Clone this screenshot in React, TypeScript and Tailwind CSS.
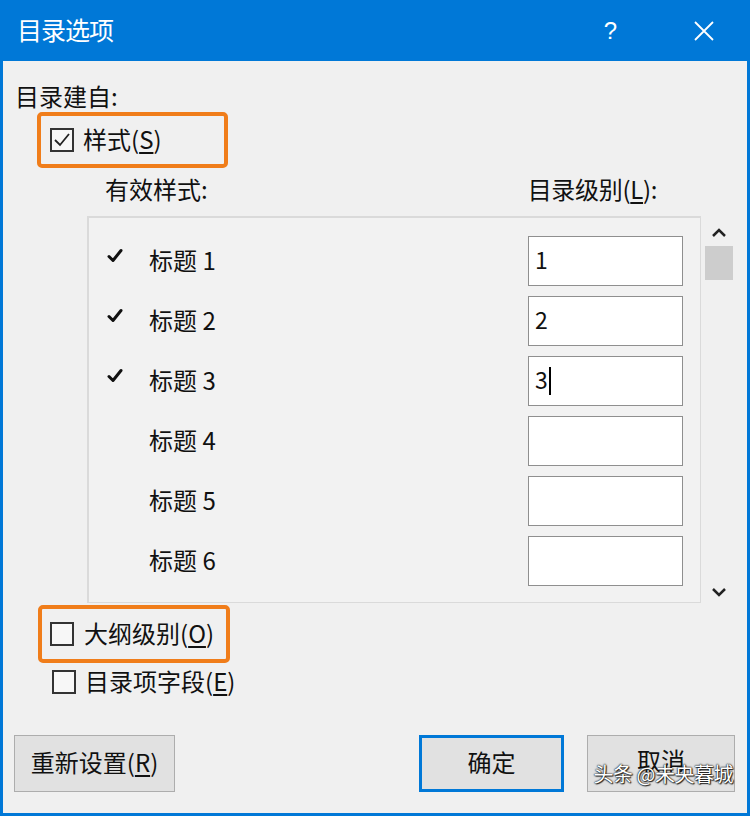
import React from "react";

const F = { fontFamily: '"Noto Sans CJK SC", "Noto Sans", sans-serif' };

function Check() {
  return (
    <svg width="16" height="16" viewBox="0 0 16 16" className="block">
      <path d="M2 8.5 L6 12.5 L14 2.5" fill="none" stroke="#111" strokeWidth="3" strokeLinecap="round" strokeLinejoin="round" />
    </svg>
  );
}

function Box({ checked }: { checked?: boolean }) {
  return (
    <div className="w-[24px] h-[24px] border-2 border-[#333] bg-[#f7f7f7] flex items-center justify-center shrink-0">
      {checked && (
        <svg width="20" height="20" viewBox="0 0 20 20">
          <path d="M3 10 L8 15 L17 4" fill="none" stroke="#222" strokeWidth="1.8" />
        </svg>
      )}
    </div>
  );
}

export default function App() {
  const rows = [
    { n: 1, c: true, v: "1" },
    { n: 2, c: true, v: "2" },
    { n: 3, c: true, v: "3", cursor: true },
    { n: 4, c: false, v: "" },
    { n: 5, c: false, v: "" },
    { n: 6, c: false, v: "" },
  ];
  return (
    <div className="w-[750px] h-[816px] flex flex-col bg-[#0078d7] text-[#111]" style={F}>
      {/* title bar */}
      <div className="h-[61px] flex items-center pl-[17px] pr-[36px] text-white shrink-0">
        <div className="text-[25px] leading-none tracking-[-1px] -mt-[2px]">目录选项</div>
        <div className="ml-auto text-[24px] leading-none mr-[77px]" style={{ fontFamily: '"Liberation Sans", sans-serif', fontWeight: 300 }}>?</div>
        <svg width="20" height="20" viewBox="0 0 20 20">
          <path d="M1 1 L19 19 M19 1 L1 19" stroke="white" strokeWidth="1.8" />
        </svg>
      </div>
      {/* body */}
      <div className="flex-1 mx-[3px] mb-[3px] bg-[#f0f0f0] flex flex-col relative">
        <div className="mt-[22px] ml-[12px] text-[24px] leading-[26px]">目录建自:</div>
        <div className="mt-[3px] ml-[34px] w-[191px] h-[56px] border-[4px] border-[#f07d1a] rounded-[5px] flex items-center pl-[9px] gap-[9px]">
          <Box checked />
          <span className="text-[24px] leading-none -mt-[2px]">样式(<span className="underline underline-offset-[3px]">S</span>)</span>
        </div>
        <div className="flex mt-[8px] h-[26px] text-[24px] leading-[26px]">
          <div className="ml-[102px]">有效样式:</div>
          <div className="ml-[320px] tracking-[-0.3px]">目录级别(<span className="underline underline-offset-[3px]">L</span>):</div>
        </div>
        <div className="flex mt-[14px]">
          <div className="ml-[84px] w-[614px] h-[387px] border-t-2 border-l-2 border-r border-b border-[#dadada] bg-[#f2f2f2] flex flex-col pt-[18px] gap-[10px]">
            {rows.map((r) => (
              <div key={r.n} className="h-[50px] flex items-center">
                <div className="w-[16px] ml-[18px] -mt-[10px]">{r.c && <Check />}</div>
                <div className="ml-[26px] text-[24px] leading-none w-[379px] -mt-[3px]">
                  标题 {r.n}
                </div>
                <div className="w-[155px] h-[50px] border border-[#8f8f8f] bg-white flex items-center pl-[6px] text-[23px] leading-none">
                  <span className="-mt-[3px]">{r.v}</span>
                  {r.cursor && <span className="inline-block w-[2px] h-[28px] bg-black ml-[1px]" />}
                </div>
              </div>
            ))}
          </div>
          <div className="w-[36px] flex flex-col items-center pt-[10px] h-[387px]">
            <svg width="16" height="12" viewBox="0 0 16 12">
              <path d="M2 10 L8 4 L14 10" fill="none" stroke="#222" strokeWidth="2.5" />
            </svg>
            <div className="mt-[8px] w-[28px] h-[34px] bg-[#cdcdcd]" />
            <div className="flex-1" />
            <svg width="16" height="12" viewBox="0 0 16 12" className="mb-[4px]">
              <path d="M2 2 L8 8 L14 2" fill="none" stroke="#222" strokeWidth="2.5" />
            </svg>
          </div>
        </div>
        <div className="mt-[2px] ml-[35px] w-[192px] h-[58px] border-[4px] border-[#f07d1a] rounded-[5px] flex items-center pl-[8px] gap-[10px]">
          <Box />
          <span className="text-[24px] leading-none -mt-[2px]">大纲级别(<span className="underline underline-offset-[3px]">O</span>)</span>
        </div>
        <div className="mt-[6px] ml-[49px] flex items-center gap-[9px] h-[26px]">
          <Box />
          <span className="text-[24px] leading-none -mt-[2px]">目录项字段(<span className="underline underline-offset-[3px]">E</span>)</span>
        </div>
        <div className="mt-[40px] flex items-start">
          <div className="ml-[11px] w-[161px] h-[57px] bg-[#e1e1e1] border border-[#adadad] flex items-center justify-center text-[24px] leading-none pb-[3px]">
            <span>重新设置(<span className="underline underline-offset-[3px]">R</span>)</span>
          </div>
          <div className="ml-[244px] w-[145px] h-[57px] bg-[#e1e1e1] border-[3px] border-[#0078d7] flex items-center justify-center text-[24px] leading-none pb-[3px]">
            确定
          </div>
          <div className="ml-[23px] w-[148px] h-[57px] bg-[#e1e1e1] border border-[#adadad] flex items-center justify-center text-[24px] leading-none pb-[7px]">
            取消
          </div>
        </div>
        <div
          className="absolute right-[14px] bottom-[29px] text-white text-[20px] leading-none tracking-[-0.5px]"
          style={{ textShadow: "0 0 2px #000, 0 0 1px #000, 1px 1px 1px #333" }}
        >
          头条 @未央暮城
        </div>
      </div>
    </div>
  );
}
